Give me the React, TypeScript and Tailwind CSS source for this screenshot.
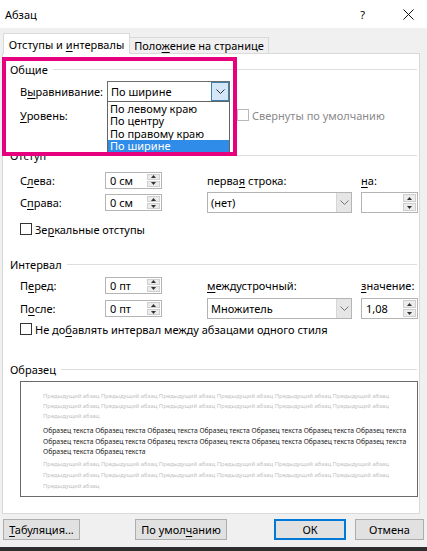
import React from "react";

function U({ children }: { children: React.ReactNode }) {
  return <span className="underline decoration-1 underline-offset-[2px]">{children}</span>;
}

function UpTri() {
  return (
    <svg width="5" height="3" viewBox="0 0 5 3">
      <path d="M0 3 L2.5 0 L5 3Z" fill="#333" />
    </svg>
  );
}
function DownTri() {
  return (
    <svg width="5" height="3" viewBox="0 0 5 3">
      <path d="M0 0 L2.5 3 L5 0Z" fill="#333" />
    </svg>
  );
}
function Chevron({ color = "#777" }: { color?: string }) {
  return (
    <svg width="9" height="5" viewBox="0 0 9 5">
      <path d="M0.5 0.5 L4.5 4.5 L8.5 0.5" stroke={color} fill="none" />
    </svg>
  );
}

function Spin({ value, className }: { value: string; className: string }) {
  return (
    <div className={`flex border border-[#b4b4b4] bg-white ${className}`}>
      <div className="flex flex-1 items-center pl-[4px] leading-none">{value}</div>
      <div className="flex w-[15px] flex-col gap-px p-px">
        <div className="flex flex-1 items-center justify-center border border-[#cfcfcf] bg-[#ececec]">
          <UpTri />
        </div>
        <div className="flex flex-1 items-center justify-center border border-[#cfcfcf] bg-[#ececec]">
          <DownTri />
        </div>
      </div>
    </div>
  );
}

function Select({ value, className }: { value: string; className: string }) {
  return (
    <div className={`flex h-[21px] border border-[#b4b4b4] bg-white ${className}`}>
      <div className="flex flex-1 items-center pl-[3px] leading-none">{value}</div>
      <div className="flex w-[15px] items-center justify-center border-l border-[#d6d6d6] bg-[#e6e6e6]">
        <Chevron />
      </div>
    </div>
  );
}

function Check({ disabled }: { disabled?: boolean }) {
  return (
    <div
      className={`h-[12px] w-[12px] shrink-0 border bg-white ${
        disabled ? "border-[#b8b8b8]" : "border-[#333]"
      }`}
    />
  );
}

function GroupTitle({ children, className }: { children: React.ReactNode; className: string }) {
  return (
    <div className={`flex h-[16px] items-center ${className}`}>
      <span className="leading-none">{children}</span>
      <div className="ml-[5px] mr-[2px] h-px flex-1 bg-[#dedede]" />
    </div>
  );
}

function Btn({ children, className }: { children: React.ReactNode; className: string }) {
  return (
    <div className={`flex h-[21px] items-center justify-center whitespace-nowrap bg-[#e1e1e1] leading-none ${className}`}>
      {children}
    </div>
  );
}

const prev = "Предыдущий абзац";
const sample = "Образец текста";
const rep = (s: string, n: number) => Array(n).fill(s).join(" ");

export default function App() {
  return (
    <div className="relative h-[551px] w-[427px] overflow-hidden whitespace-nowrap bg-[#f0f0f0] font-['Noto_Sans',sans-serif] text-[11px] text-black">
      {/* Title bar */}
      <div className="flex h-[28px] items-center bg-white pl-[5px]">
        <span className="leading-none">Абзац</span>
        <div className="flex-1" />
        <span className="mr-[38px] leading-none">?</span>
        <svg width="11" height="11" viewBox="0 0 11 11" className="mr-[13px]">
          <path d="M0.5 0.5 L10.5 10.5 M10.5 0.5 L0.5 10.5" stroke="#111" strokeWidth="1" />
        </svg>
      </div>

      {/* Tabs */}
      <div className="relative z-10 -mb-px flex h-[26px] items-end pl-[3px]">
        <div className="flex h-[21px] w-[127px] items-center justify-center border border-b-0 border-[#d9d9d9] bg-white leading-none">
          <span>
            Отступы и <U>и</U>нтервалы
          </span>
        </div>
        <div className="mb-px flex h-[16px] w-[139px] items-center justify-center border border-b-0 border-l-0 border-[#d9d9d9] bg-[#f0f0f0] leading-none">
          <span>
            Поло<U>ж</U>ение на странице
          </span>
        </div>
      </div>

      {/* Panel */}
      <div className="ml-[2px] h-[461px] w-[418px] border border-[#d9d9d9] bg-white">
        <div className="flex flex-col pl-[7px]">
          <GroupTitle className="mt-[7px]">Общие</GroupTitle>

          <div className="mt-[4px] flex h-[21px] items-center pl-[10px]">
            <span className="w-[87px] shrink-0 leading-none">
              В<U>ы</U>равнивание:
            </span>
            <div className="relative">
              <div className="flex h-[21px] w-[123px] border border-[#6e6e6e] bg-white">
                <div className="flex flex-1 items-center pl-[3px] leading-none">По ширине</div>
                <div className="flex w-[18px] items-center justify-center border border-[#3c7fb1] bg-[#d4e7f8]">
                  <Chevron color="#333" />
                </div>
              </div>
              <div className="absolute left-0 top-full z-20 -mt-px flex w-[123px] flex-col border border-[#646464] bg-white">
                <div className="flex h-[12.5px] items-center pl-[2px] leading-none">По левому краю</div>
                <div className="flex h-[12.5px] items-center pl-[2px] leading-none">По центру</div>
                <div className="flex h-[12.5px] items-center pl-[2px] leading-none">По правому краю</div>
                <div className="flex h-[12.5px] items-center bg-[#2f8ce8] pl-[2px] leading-none text-white">
                  По ширине
                </div>
              </div>
            </div>
          </div>

          <div className="mt-[3px] flex h-[20px] items-center pl-[10px]">
            <span className="w-[217px] shrink-0 leading-none">
              <U>У</U>ровень:
            </span>
            <Check disabled />
            <span className="ml-[3px] leading-none text-[#8a8a8a]">Свернуты по умолчанию</span>
          </div>

          <GroupTitle className="mt-[22px]">Отступ</GroupTitle>

          <div className="mt-[8px] flex h-[18px] items-center pl-[10px]">
            <span className="w-[85px] shrink-0 leading-none">
              С<U>л</U>ева:
            </span>
            <Spin value="0 см" className="h-[17px] w-[57px]" />
            <span className="ml-[45px] w-[154px] shrink-0 leading-none">
              перва<U>я</U> строка:
            </span>
            <span className="leading-none">
              <U>н</U>а:
            </span>
          </div>

          <div className="mt-[3px] flex h-[21px] items-center pl-[10px]">
            <span className="w-[85px] shrink-0 leading-none">
              С<U>п</U>рава:
            </span>
            <Spin value="0 см" className="h-[17px] w-[57px]" />
            <Select value="(нет)" className="ml-[45px] w-[145px]" />
            <Spin value="" className="ml-[9px] h-[21px] w-[57px]" />
          </div>

          <div className="mt-[8px] flex h-[16px] items-center pl-[10px]">
            <Check />
            <span className="ml-[3px] leading-none">
              Зе<U>р</U>кальные отступы
            </span>
          </div>

          <GroupTitle className="mt-[19px]">Интервал</GroupTitle>

          <div className="mt-[4px] flex h-[18px] items-center pl-[10px]">
            <span className="w-[85px] shrink-0 leading-none">
              П<U>е</U>ред:
            </span>
            <Spin value="0 пт" className="h-[17px] w-[57px]" />
            <span className="ml-[45px] w-[154px] shrink-0 leading-none">
              <U>м</U>еждустрочный:
            </span>
            <span className="leading-none">
              <U>з</U>начение:
            </span>
          </div>

          <div className="mt-[4px] flex h-[21px] items-center pl-[10px]">
            <span className="w-[85px] shrink-0 leading-none">
              П<U>о</U>сле:
            </span>
            <Spin value="0 пт" className="h-[17px] w-[57px]" />
            <Select value="Множитель" className="ml-[45px] w-[145px]" />
            <Spin value="1,08" className="ml-[9px] h-[21px] w-[57px]" />
          </div>

          <div className="mt-[2px] flex h-[16px] items-center pl-[10px]">
            <Check />
            <span className="ml-[3px] leading-none">
              Не до<U>б</U>авлять интервал между абзацами одного стиля
            </span>
          </div>

          <GroupTitle className="mt-[24px]">Образец</GroupTitle>

          <div className="ml-[10px] mt-[4px] h-[116px] w-[398px] overflow-hidden border border-[#6a6a6a] bg-white pl-[22px] pt-[9px]">
            <div className="text-[5.9px] leading-[10px] text-[#c2c2c2]">{rep(prev, 6)}</div>
            <div className="text-[5.9px] leading-[10px] text-[#c2c2c2]">{rep(prev, 6)}</div>
            <div className="text-[5.9px] leading-[10px] text-[#c2c2c2]">{prev}</div>
            <div className="mt-[5px] text-[6.75px] leading-[10.5px] text-[#1a1a1a]">{rep(sample, 7)}</div>
            <div className="text-[6.75px] leading-[10.5px] text-[#1a1a1a]">{rep(sample, 7)}</div>
            <div className="text-[6.75px] leading-[10.5px] text-[#1a1a1a]">{rep(sample, 2)}</div>
            <div className="mt-px text-[5.9px] leading-[11px] text-[#c2c2c2]">{rep(prev, 6)}</div>
            <div className="text-[5.9px] leading-[11px] text-[#c2c2c2]">{rep(prev, 6)}</div>
            <div className="text-[5.9px] leading-[11px] text-[#c2c2c2]">{prev}</div>
          </div>
        </div>
      </div>

      {/* Buttons */}
      <div className="mt-[5px] flex h-[21px]">
        <Btn className="ml-[3px] w-[77px] border border-[#adadad]">
          <span>
            <U>Т</U>абуляция...
          </span>
        </Btn>
        <Btn className="ml-[55px] w-[92px] border border-[#adadad]">
          <span>
            По умол<U>ч</U>анию
          </span>
        </Btn>
        <Btn className="ml-[47px] w-[72px] border-2 border-[#0078d7]">ОК</Btn>
        <Btn className="ml-[9px] w-[69px] border border-[#adadad]">Отмена</Btn>
      </div>

      {/* Bottom dark edge */}
      <div className="mt-[7px] h-[4px] bg-[#2e2e2e]" />

      {/* Pink highlight frame */}
      <div className="pointer-events-none absolute left-[2px] top-[57px] z-30 h-[99px] w-[235px] border-4 border-[#e6007e]" />
    </div>
  );
}
